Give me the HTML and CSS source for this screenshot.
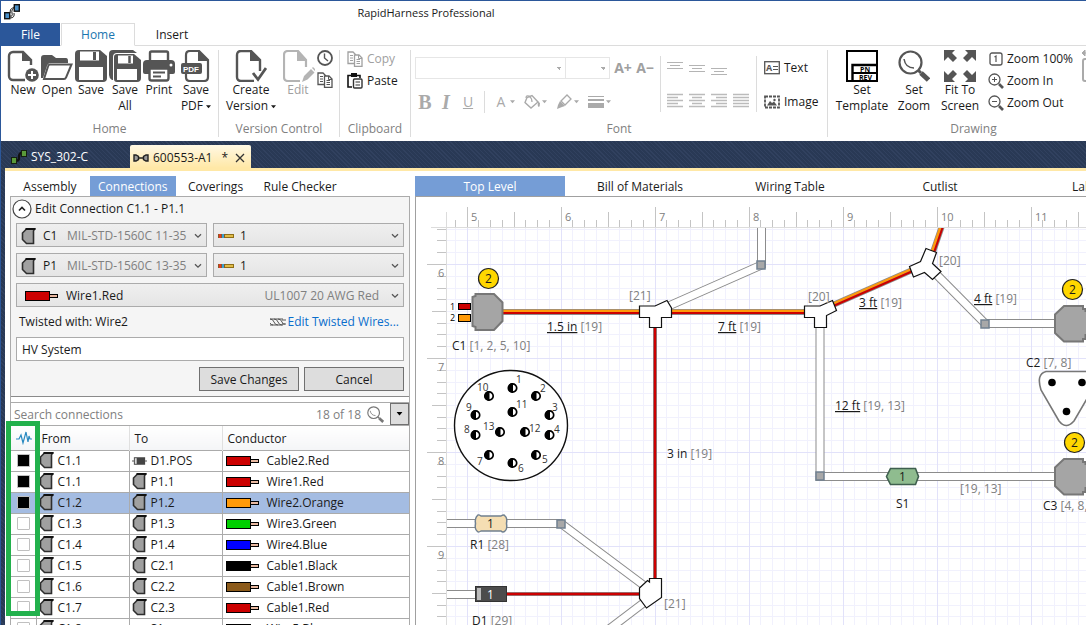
FILE: index.html
```html
<!DOCTYPE html>
<html lang="en">
<head>
<meta charset="utf-8">
<title>RapidHarness Professional</title>
<link rel="stylesheet" href="styles.css">
</head>
<body>
<svg class="defs" aria-hidden="true">
  <symbol id="i-conn" viewBox="0 0 15 17"><path d="M5.500 1H13.500L12.500 3V15.500H5.500L1.500 11.500V5Z" fill="#a0a0a0" stroke="#2e2e2e" stroke-width="1.600"/><path d="M4.500 1h10" stroke="#111" stroke-width="2"/></symbol>
  <symbol id="i-diode" viewBox="0 0 16 10"><path d="M0 5h16" stroke="#888" stroke-width="1.500"/><rect x="2" y="1" width="12" height="8" fill="#444"/><rect x="3" y="2" width="2" height="6" fill="#ddd"/></symbol>
  <symbol id="i-wire" viewBox="0 0 34 10"><rect x="24.500" y="3.500" width="8" height="3" fill="#e8b8a0" stroke="#000"/><rect x=".5" y=".5" width="24" height="9" fill="currentColor" stroke="#000"/></symbol>
  <symbol id="i-pin" viewBox="0 0 16 6"><rect y="1" width="8" height="4" fill="#8a5a2a"/><rect x="1" y="1" width="2" height="4" fill="#e03a20"/><rect x="4" y="1" width="2" height="4" fill="#3aa0d0"/><rect x="7" y="1" width="9" height="4" fill="#8f6f18"/><rect x="7" y="2" width="8" height="2" fill="#e0bc48"/></symbol>
  <symbol id="i-chev" viewBox="0 0 8 6"><path d="M1 1.200l3 3 3-3" fill="none" stroke="#555" stroke-width="1.300"/></symbol>
  <symbol id="i-down" viewBox="0 0 6 4"><path d="M0 0h6L3 3.500z" fill="currentColor"/></symbol>
  <symbol id="i-lens" viewBox="0 0 32 32"><circle cx="12.500" cy="12.500" r="11" fill="none" stroke="currentColor" stroke-width="2.200"/><path d="M6 9c1 6 5 9 10 9" fill="none" stroke="currentColor" stroke-width="1.500"/><path d="M20.500 20.500l2.500 2.500" stroke="currentColor" stroke-width="3"/><path d="M23 23l7.500 7" stroke="currentColor" stroke-width="5"/></symbol>
  <symbol id="i-docs" viewBox="0 0 16 16"><path d="M7 12.500H1V1h5l2.500 2.500V5" fill="none" stroke="currentColor" stroke-width="1.300"/><path d="M3 4.500h3M3 7h3M3 9.500h3" stroke="currentColor"/><path d="M7.500 4h4.500l3 3v8.500H7.500z" fill="#fff" stroke="currentColor" stroke-width="1.300"/><path d="M9.500 8.500H13M9.500 10.500H13M9.500 12.500H13M11.500 4v3.500H15" stroke="currentColor" fill="none"/></symbol>
</svg>

<div class="window">
  <header class="titlebar">
    <svg class="logo" width="16" height="16" viewBox="0 0 16 16"><rect x=".7" y="8.700" width="5" height="6" fill="#4a90c8" stroke="#111" stroke-width="1.400"/><rect x="10.300" y=".7" width="5" height="6.500" fill="#4a90c8" stroke="#111" stroke-width="1.400"/><path d="M6 12q3 1 2-3t3-5M6 14q5 0 4-5M6 9q-1-4 4-6" fill="none" stroke="#222" stroke-width="1"/></svg>
    <h1>RapidHarness Professional</h1>
  </header>

  <nav class="ribbon-tabs">
    <button class="rt file">File</button><button class="rt on">Home</button><button class="rt">Insert</button>
  </nav>

  <div class="ribbon">
    <section class="group g-home">
      <div class="tools">
        <button class="big"><svg width="32" height="32" viewBox="0 0 32 32"><path d="M18 30H6a4 4 0 0 1-4-4V6a4 4 0 0 1 4-4h10l8 8v5" fill="none" stroke="#555" stroke-width="2.400"/><path d="M15 1l9 10h-9z" fill="#555"/><circle cx="25" cy="25" r="6.800" fill="#555"/><path d="M25 21v8M21 25h8" stroke="#fff" stroke-width="2"/></svg>New</button>
        <button class="big"><svg width="32" height="32" viewBox="0 0 32 32"><path d="M0 28V8q0-3 3-3h8l4 3h10q2 0 2 3v2H10q-3 0-4 3L2 28z" fill="#555"/><path d="M9 14.500h21.500L25 27.500q-.5 1.500-2 1.500H3l4-12.500q.5-2 2-2z" fill="#fff" stroke="#555" stroke-width="2"/></svg>Open</button>
        <button class="big"><svg width="32" height="32" viewBox="0 0 32 32"><path d="M4 0h21l7 6v22q0 4-4 4H4q-4 0-4-4V4q0-4 4-4z" fill="#555"/><path d="M5 1.500h19v9H5zM4 17h24v13H4z" fill="#fff"/><path d="M19.500 2v8" stroke="#555" stroke-width="3"/></svg>Save</button>
        <button class="big"><svg width="32" height="32" viewBox="0 0 32 32"><path d="M3 30Q0 28 0 25V4q0-4 4-4h20l4 3H8Q4 3 4 7v23z" fill="#555"/><path d="M8 4h17l7 6v18q0 4-4 4H8q-3 0-3-3V7q0-3 3-3z" fill="#555"/><path d="M9 5.500h15v8H9zM8 19h20v11H8z" fill="#fff"/><path d="M20.500 6v7" stroke="#555" stroke-width="2.500"/></svg>Save<br>All</button>
        <button class="big"><svg width="32" height="32" viewBox="0 0 32 32"><path d="M7 11V3q0-1.500 1.500-1.500h15Q25 1.500 25 3v8" fill="none" stroke="#555" stroke-width="2.400"/><path d="M4 10h24q4 0 4 4v8q0 2-2 2H2q-2 0-2-2v-8q0-4 4-4z" fill="#555"/><circle cx="28" cy="15" r="1.500" fill="#fff"/><path d="M6.500 18.500h19V28q0 2.500-2 2.500h-15q-2 0-2-2z" fill="#fff" stroke="#555" stroke-width="2.400"/><path d="M10 22.500h12M10 26.500h8" stroke="#555" stroke-width="2"/></svg>Print</button>
        <button class="big wide"><svg width="32" height="32" viewBox="0 0 32 32"><path d="M6 13V5q0-4 4-4h9l9 9v17q0 4-4 4H10q-4 0-4-4v-3" fill="none" stroke="#555" stroke-width="2.200"/><path d="M18 0l11 11H18z" fill="#555"/><rect x="1" y="13" width="21" height="11" rx="2" fill="#555"/><text x="3" y="22" class="pdf">PDF</text></svg>Save<br>PDF <svg width="5" height="4"><use href="#i-down"/></svg></button>
      </div>
      <h2>Home</h2>
    </section>

    <section class="group g-ver">
      <div class="tools">
        <button class="big create"><svg width="32" height="32" viewBox="0 0 32 32"><path d="M19 31H6q-4 0-4-4V5q0-4 4-4h10l9 9v11" fill="none" stroke="#555" stroke-width="2.400"/><path d="M15 0l11 11H15z" fill="#555"/><path d="M18 23l5 6.500L31 18" fill="none" stroke="#555" stroke-width="2.800"/></svg>Create<br>Version <svg width="5" height="4"><use href="#i-down"/></svg></button>
        <button class="big edit" disabled><svg width="32" height="32" viewBox="0 0 32 32"><path d="M17 31H5q-4 0-4-4V5q0-4 4-4h10l8 9v7" fill="none" stroke="#b4b4b4" stroke-width="2.200"/><path d="M14 0l10 11H14z" fill="#b4b4b4"/><path d="M19 32l2-6 7-7 3.500 3.500-7 7zM29 18l1-1 3 3-1 1z" fill="#b4b4b4"/></svg>Edit</button>
        <div class="mini">
          <button aria-label="History"><svg width="16" height="16" viewBox="0 0 16 16"><circle cx="8" cy="8" r="7" fill="none" stroke="#555" stroke-width="1.800"/><path d="M7.500 3.500V8l3.500 3" fill="none" stroke="#555" stroke-width="1.400"/></svg></button>
          <button aria-label="Compare"><svg class="dk" width="16" height="16"><use href="#i-docs"/></svg></button>
        </div>
      </div>
      <h2>Version Control</h2>
    </section>

    <section class="group g-clip">
      <div class="tools stack">
        <button class="row" disabled><svg width="16" height="16"><use href="#i-docs"/></svg>Copy</button>
        <button class="row"><svg width="16" height="16" viewBox="0 0 16 16"><path d="M5 14H1V2.500h12V5" fill="none" stroke="#111" stroke-width="1.600"/><rect x="4" y="0" width="6" height="4" fill="#111"/><rect x="6.500" y="6" width="8.500" height="9" rx="1" fill="#fff" stroke="#333" stroke-width="1.400"/><path d="M8.500 9H13M8.500 12H13" stroke="#333" stroke-width="1.200"/></svg>Paste</button>
      </div>
      <h2>Clipboard</h2>
    </section>

    <section class="group g-font">
      <div class="tools font">
        <div class="fcol">
          <div class="frow">
            <span class="fsel"><select class="fam" aria-label="Font family" disabled></select><select class="siz" aria-label="Font size" disabled></select></span>
            <button class="glyph" disabled>A+</button><button class="glyph" disabled>A−</button>
          </div>
          <div class="frow marks">
            <button class="b" disabled>B</button><button class="i" disabled>I</button><button class="u" disabled>U</button>
            <span class="vr"></span>
            <button class="drop" disabled><b class="a">A</b><svg width="5" height="4"><use href="#i-down"/></svg></button>
            <button class="drop" disabled aria-label="Fill"><svg width="17" height="16" viewBox="0 0 17 16"><path d="M3 3.500L8 1.500 14 8 7 14 1 8.500z" fill="none" stroke="#aaa" stroke-width="1.400"/><path d="M2 4q0-3 3-2 3 2 3 6" fill="none" stroke="#aaa" stroke-width="1.200"/><path d="M12 6l4 3q0 3-1 4-2-1-1-4z" fill="#aaa"/></svg><svg width="5" height="4"><use href="#i-down"/></svg></button>
            <button class="drop" disabled aria-label="Outline"><svg width="17" height="16" viewBox="0 0 17 16"><path d="M5 7l6-6 4 4-6 6z" fill="none" stroke="#aaa" stroke-width="1.300"/><path d="M4 7l5 5-3 1-5 2 1-4z" fill="#aaa"/></svg><svg width="5" height="4"><use href="#i-down"/></svg></button>
            <button class="drop" disabled aria-label="Line weight"><svg width="17" height="14" viewBox="0 0 17 14"><path d="M0 1.500h16" stroke="#aaa"/><path d="M0 5h16" stroke="#aaa" stroke-width="2"/><path d="M0 10.500h16" stroke="#aaa" stroke-width="5"/></svg><svg width="5" height="4"><use href="#i-down"/></svg></button>
          </div>
        </div>
        <div class="aligns">
          <button disabled aria-label="Top"><svg width="16" height="16"><path d="M0 2.500h16M3 5.500h10M0 8.500h16" stroke="#b4b4b4"/></svg></button>
          <button disabled aria-label="Middle"><svg width="16" height="16"><path d="M0 5.500h16M3 8.500h10M0 11.500h16" stroke="#b4b4b4"/></svg></button>
          <button disabled aria-label="Bottom"><svg width="16" height="16"><path d="M0 8.500h16M3 11.500h10M0 14.500h16" stroke="#b4b4b4"/></svg></button>
          <span></span>
          <button disabled aria-label="Left"><svg width="16" height="16"><path d="M0 1.500h16M0 4.500h11M0 7.500h16M0 10.500h11M0 13.500h16" stroke="#bbb" stroke-width="1.500"/></svg></button>
          <button disabled aria-label="Center"><svg width="16" height="16"><path d="M0 1.500h16M3 4.500h10M0 7.500h16M3 10.500h10M0 13.500h16" stroke="#bbb" stroke-width="1.500"/></svg></button>
          <button disabled aria-label="Right"><svg width="16" height="16"><path d="M0 1.500h16M5 4.500h11M0 7.500h16M5 10.500h11M0 13.500h16" stroke="#bbb" stroke-width="1.500"/></svg></button>
          <button disabled aria-label="Justify"><svg width="16" height="16"><path d="M0 1.500h16M0 4.500h16M0 7.500h16M0 10.500h16M0 13.500h16" stroke="#bbb" stroke-width="1.500"/></svg></button>
        </div>
        <div class="inserts">
          <button class="row"><svg width="16" height="16" viewBox="0 0 16 16"><rect x=".7" y="1.700" width="14.600" height="12" fill="#fff" stroke="#555" stroke-width="1.300"/><text x="2" y="11" class="at">A</text><path d="M9 6.500h5M9 9.500h5" stroke="#555"/></svg>Text</button>
          <button class="row"><svg width="16" height="16" viewBox="0 0 16 16"><rect x="1" y="2.500" width="14" height="11" fill="none" stroke="#555" stroke-width="1.800" stroke-dasharray="3 1"/><path d="M3 11.500l3-4.500 2 2 2-1.500 3 4z" fill="#555"/><circle cx="10.500" cy="6" r="1.200" fill="#555"/></svg>Image</button>
        </div>
      </div>
      <h2>Font</h2>
    </section>

    <section class="group g-draw">
      <div class="tools">
        <button class="big tpl"><svg width="32" height="32" viewBox="0 0 32 32"><rect x="1" y="1" width="30" height="30" fill="#fff" stroke="#000" stroke-width="2"/><path d="M6.500 31V15H31" fill="none" stroke="#000" stroke-width="2.400"/><path d="M7 23h24" stroke="#000" stroke-width="2"/><text x="14" y="21.500" class="pn">PN</text><text x="13" y="29.500" class="pn">REV</text></svg>Set<br>Template</button>
        <button class="big zm"><svg class="dk" width="32" height="32"><use href="#i-lens"/></svg>Set<br>Zoom</button>
        <button class="big fit"><svg width="32" height="32" viewBox="0 0 32 32"><path d="M0 0h11L8 3l5 5-4 4-5-5-4 4zM32 0H21l3 3-5 5 4 4 5-5 4 4zM0 32h11l-3-3 5-5-4-4-5 5-4-4zM32 32H21l3-3-5-5 4-4 5 5 4-4z" fill="#555"/></svg>Fit To<br>Screen</button>
        <div class="stack zs">
          <button class="row"><svg width="16" height="16" viewBox="0 0 16 16"><rect x="2" y="2" width="12" height="12" rx="2" fill="none" stroke="#555" stroke-width="1.300"/><path d="M6.500 6L8 5v6" fill="none" stroke="#555" stroke-width="1.200"/></svg>Zoom 100%</button>
          <button class="row"><svg width="16" height="16" viewBox="0 0 16 16"><circle cx="6.500" cy="6.500" r="5.500" fill="none" stroke="#555" stroke-width="1.300"/><path d="M4 6.500h5M6.500 4v5" stroke="#555"/><path d="M11 11l4 4" stroke="#555" stroke-width="2.600"/></svg>Zoom In</button>
          <button class="row"><svg width="16" height="16" viewBox="0 0 16 16"><circle cx="6.500" cy="6.500" r="5.500" fill="none" stroke="#555" stroke-width="1.300"/><path d="M4 6.500h5" stroke="#555"/><path d="M11 11l4 4" stroke="#555" stroke-width="2.600"/></svg>Zoom Out</button>
        </div>
        <button class="big" disabled aria-label="Size"><svg width="32" height="32" viewBox="0 0 32 32"><path d="M0 3l3-3v6zM0 3h32" stroke="#aaa" fill="#aaa"/><rect x="1" y="9" width="30" height="22" rx="2" fill="none" stroke="#aaa" stroke-width="2"/></svg></button>
      </div>
      <h2>Drawing</h2>
    </section>
  </div>

  <div class="shell">
    <nav class="docs">
      <a class="doc" href="#sys"><svg width="16" height="16" viewBox="0 0 16 16"><path d="M5 11q3 2 3-3t4-4" fill="none" stroke="#111" stroke-width="2.400"/><rect x=".5" y="8.500" width="5" height="6" fill="#5a9a3a" stroke="#152010"/><rect x="10.500" y="1.500" width="5" height="6" fill="#5a9a3a" stroke="#152010"/></svg>SYS_302-C</a>
      <a class="doc on" href="#a1"><svg width="16" height="10" viewBox="0 0 16 10"><path d="M5 5h6" stroke="#222" stroke-width="1.500"/><path d="M1 2h2l2.500 1.500v3L3 8H1zM15 2h-2l-2.500 1.500v3L13 8h2z" fill="#999" stroke="#222" stroke-width="1.400"/></svg><span>600553-A1</span><i>*</i><svg width="10" height="10"><path d="M1 1l8 8M9 1l-8 8" stroke="#333" stroke-width="1.300"/></svg></a>
    </nav>
    <main class="work">
      <section class="left">
        <nav class="tabs">
          <button>Assembly</button><button class="on">Connections</button><button>Coverings</button><button>Rule Checker</button>
        </nav>
        <div class="panel">
          <form class="editor">
            <h3><svg width="20" height="20"><circle cx="10" cy="10" r="9" fill="#fff" stroke="#444" stroke-width="1.200"/><path d="M7 11.500l3-3 3 3" fill="none" stroke="#222" stroke-width="1.700"/></svg>Edit Connection C1.1 - P1.1</h3>
            <div class="pair">
              <label class="combo c"><select><option>C1</option></select><span><svg width="15" height="17"><use href="#i-conn"/></svg><em>MIL-STD-1560C 11-35</em><svg class="end" width="8" height="6"><use href="#i-chev"/></svg></span></label>
              <label class="combo p"><select><option>1</option></select><span><svg width="16" height="6"><use href="#i-pin"/></svg><svg class="end" width="8" height="6"><use href="#i-chev"/></svg></span></label>
            </div>
            <div class="pair">
              <label class="combo c"><select><option>P1</option></select><span><svg width="15" height="17"><use href="#i-conn"/></svg><em>MIL-STD-1560C 13-35</em><svg class="end" width="8" height="6"><use href="#i-chev"/></svg></span></label>
              <label class="combo p"><select><option>1</option></select><span><svg width="16" height="6"><use href="#i-pin"/></svg><svg class="end" width="8" height="6"><use href="#i-chev"/></svg></span></label>
            </div>
            <label class="combo w"><select><option>Wire1.Red</option></select><span><svg class="red" width="34" height="10"><use href="#i-wire"/></svg><em class="end">UL1007 20 AWG Red</em><svg width="8" height="6"><use href="#i-chev"/></svg></span></label>
            <div class="twist"><span>Twisted with: Wire2</span><a href="#twist"><svg width="16" height="8" viewBox="0 0 16 8"><path d="M0 1q3 0 4 3t4 3M0 5q1 2 3 2M4 1q3 0 4 3t4 3M8 1q3 0 4 3t3 2M0 7h13M0 1h13M12 2h4M12 6h4" fill="none" stroke="#555"/></svg>Edit Twisted Wires...</a></div>
            <input class="note" aria-label="Signal" value="HV System">
            <div class="acts"><button type="button">Save Changes</button><button type="button">Cancel</button></div>
          </form>
          <div class="search"><input aria-label="Search connections" placeholder="Search connections"><span>18 of 18</span><svg class="lens" width="17" height="17"><use href="#i-lens"/></svg><button aria-label="Search options"><svg width="7" height="4" viewBox="0 0 6 4"><use href="#i-down"/></svg></button></div>
          <table class="list">
            <colgroup><col class="k"><col class="f"><col class="t"><col></colgroup>
            <thead><tr><th><svg width="16" height="14"><path d="M0 8h3l2-4 2 8L10 1l2 10 1-6 1 3h2" fill="none" stroke="#2a8ac0" stroke-width="1.200"/></svg></th><th>From</th><th>To</th><th>Conductor</th></tr></thead>
            <tbody>
              <tr><td><input type="checkbox" checked aria-label="Highlight Cable2.Red"></td><td><div><svg width="15" height="17"><use href="#i-conn"/></svg>C1.1</div></td><td><div><svg width="15" height="10"><use href="#i-diode"/></svg>D1.POS</div></td><td><div><svg class="red" width="34" height="10"><use href="#i-wire"/></svg>Cable2.Red</div></td></tr>
              <tr><td><input type="checkbox" checked aria-label="Highlight Wire1.Red"></td><td><div><svg width="15" height="17"><use href="#i-conn"/></svg>C1.1</div></td><td><div><svg width="15" height="17"><use href="#i-conn"/></svg>P1.1</div></td><td><div><svg class="red" width="34" height="10"><use href="#i-wire"/></svg>Wire1.Red</div></td></tr>
              <tr class="sel"><td><input type="checkbox" checked aria-label="Highlight Wire2.Orange"></td><td><div><svg width="15" height="17"><use href="#i-conn"/></svg>C1.2</div></td><td><div><svg width="15" height="17"><use href="#i-conn"/></svg>P1.2</div></td><td><div><svg class="orange" width="34" height="10"><use href="#i-wire"/></svg>Wire2.Orange</div></td></tr>
              <tr><td><input type="checkbox" aria-label="Highlight Wire3.Green"></td><td><div><svg width="15" height="17"><use href="#i-conn"/></svg>C1.3</div></td><td><div><svg width="15" height="17"><use href="#i-conn"/></svg>P1.3</div></td><td><div><svg class="green" width="34" height="10"><use href="#i-wire"/></svg>Wire3.Green</div></td></tr>
              <tr><td><input type="checkbox" aria-label="Highlight Wire4.Blue"></td><td><div><svg width="15" height="17"><use href="#i-conn"/></svg>C1.4</div></td><td><div><svg width="15" height="17"><use href="#i-conn"/></svg>P1.4</div></td><td><div><svg class="blue" width="34" height="10"><use href="#i-wire"/></svg>Wire4.Blue</div></td></tr>
              <tr><td><input type="checkbox" aria-label="Highlight Cable1.Black"></td><td><div><svg width="15" height="17"><use href="#i-conn"/></svg>C1.5</div></td><td><div><svg width="15" height="17"><use href="#i-conn"/></svg>C2.1</div></td><td><div><svg class="black" width="34" height="10"><use href="#i-wire"/></svg>Cable1.Black</div></td></tr>
              <tr><td><input type="checkbox" aria-label="Highlight Cable1.Brown"></td><td><div><svg width="15" height="17"><use href="#i-conn"/></svg>C1.6</div></td><td><div><svg width="15" height="17"><use href="#i-conn"/></svg>C2.2</div></td><td><div><svg class="brown" width="34" height="10"><use href="#i-wire"/></svg>Cable1.Brown</div></td></tr>
              <tr><td><input type="checkbox" aria-label="Highlight Cable1.Red"></td><td><div><svg width="15" height="17"><use href="#i-conn"/></svg>C1.7</div></td><td><div><svg width="15" height="17"><use href="#i-conn"/></svg>C2.3</div></td><td><div><svg class="red" width="34" height="10"><use href="#i-wire"/></svg>Cable1.Red</div></td></tr>
              <tr><td><input type="checkbox" aria-label="Highlight Wire5.Blue"></td><td><div><svg width="15" height="17"><use href="#i-conn"/></svg>C1.8</div></td><td><div><svg width="15" height="8"><rect x="1" y="1" width="12" height="6" fill="#8fbc8f" stroke="#3f5f4f"/></svg>S1</div></td><td><div><svg class="black" width="34" height="10"><use href="#i-wire"/></svg>Wire5.Blue</div></td></tr>
            </tbody>
          </table>
          <div class="mark"></div>
        </div>
      </section>

      <section class="right">
        <nav class="tabs views"><button class="on">Top Level</button><button>Bill of Materials</button><button>Wiring Table</button><button>Cutlist</button><button>Labels</button></nav>
        <div class="canvas">
          <svg class="drawing" role="img" aria-label="Harness drawing">
            <defs>
              <pattern id="grid" x="467" y="264" width="94" height="94" patternUnits="userSpaceOnUse">
                <path d="M11.500 0v94M23.500 0v94M35.500 0v94M47.500 0v94M58.500 0v94M70.500 0v94M82.500 0v94M0 12.500h94M0 24.500h94M0 35.500h94M0 47.500h94M0 59.500h94M0 70.500h94M0 82.500h94" stroke="#f1f1fd"/>
                <path d="M.5 0v94M0 .5h94" stroke="#e2e2fa"/>
              </pattern>
              <pattern id="rx" x="467" y="207" width="94" height="20" patternUnits="userSpaceOnUse">
                <path d="M.5 0v20M47.500 5v15M11.500 13v7M23.500 13v7M35.500 13v7M58.500 13v7M70.500 13v7M82.500 13v7" stroke="#c4c4c4"/>
              </pattern>
              <pattern id="ry" x="427" y="264" width="20" height="94" patternUnits="userSpaceOnUse">
                <path d="M0 .5h20M5 47.500h15M10 12.500h10M10 24.500h10M10 35.500h10M10 59.500h10M10 70.500h10M10 82.500h10" stroke="#c4c4c4"/>
              </pattern>
              <clipPath id="sheet"><rect x="447" y="228" width="3000" height="3000"/></clipPath>
              <g id="pinhole"><circle r="4.200" fill="#fff" stroke="#000" stroke-width="1.700"/><path d="M.5-5a5 5 0 0 0 0 10z"/></g>
              <path id="plug" d="M0 9.500L9 1H28v3h2.500v2H39v24h-8.500v4H28v2.500H9L0 28z" fill="#a5a5a5" stroke="#777" stroke-width="2"/>
              <rect id="node" x="-4" y="-4" width="8" height="8" fill="#a8a8a8" stroke="#708090" stroke-width="1.500"/>
            </defs>
            <g transform="translate(-416 -197)">
              <rect x="447" y="228" width="3000" height="3000" fill="url(#grid)"/>
              <rect x="447" y="207" width="3000" height="20" fill="url(#rx)"/>
              <rect x="427" y="228" width="20" height="3000" fill="url(#ry)"/>
              <path d="M431 227.500h3000M446.500 212v3000" stroke="#dcdcdc"/>
              <g class="num"><text x="471" y="221">5</text><text x="565" y="221">6</text><text x="659" y="221">7</text><text x="753" y="221">8</text><text x="847" y="221">9</text><text x="941" y="221">10</text><text x="1035" y="221">11</text>
              <text x="438" y="277">6</text><text x="438" y="371">7</text><text x="438" y="465">8</text><text x="438" y="559">9</text></g>

              <g clip-path="url(#sheet)">
                <g class="tube"><path d="M761.500 220V265L655 312"/><path d="M937 275L985 323.500H1056"/><path d="M820 320V476.500H1056"/><path d="M440 523.500H561L650 590"/><path d="M440 594.500H480"/><path d="M650 598L600 636"/></g>
                <g class="core"><path d="M761.500 220V265L655 312"/><path d="M937 275L985 323.500H1056"/><path d="M820 320V476.500H1056"/><path d="M440 523.500H561L650 590"/><path d="M440 594.500H480"/><path d="M650 598L600 636"/></g>
                <path d="M503 312H815M826 308L926 264M932 255L944 220" stroke="#8c8c8c" stroke-width="6"/>
                <path d="M503 311H815M825.500 307L925.500 263M931 254.500L943 219.500" stroke="#ff9a0a" stroke-width="2.400"/>
                <path d="M503 313H815M826.500 309L926.500 265M933 255.500L945 220.500" stroke="#cc0000" stroke-width="2"/>
                <path d="M655 320V585M503 594H645" stroke="#8c8c8c" stroke-width="4"/>
                <path d="M655 320V585M503 594H645" stroke="#cc0000" stroke-width="2.400"/>
                <g fill="#fff" stroke="#111" stroke-width="1.200">
                  <path d="M639.500 306H655L667 300.500 671.500 308V317.500H661.500V327.500H649.500V317.500H639.500z"/>
                  <path d="M804.500 306H820L832.500 300.500 836.500 310.500 826.500 315.500V327.500H814.500V317.500H804.500z"/>
                  <path d="M926 248.500L936.500 252.500 932.500 263.500 941 271.500 932.500 279.500 924.500 272.500 913.500 277 909.500 266.500 920.500 261.500z"/>
                  <path d="M639.500 588L647.500 580.500 649.500 582V578.500H661.500V597.500L646.500 608 639.500 598.500z"/>
                </g>
                <use href="#node" x="761" y="265"/><use href="#node" x="985" y="324"/><use href="#node" x="820" y="476"/><use href="#node" x="561" y="524"/>
                <use href="#plug" x="1055" y="305"/><use href="#plug" x="1055" y="458"/>
                <path d="M475.500 294H494L502.500 302.500V321L494 330H475.500V327L472.500 326V297L475.500 296z" fill="#a5a5a5" stroke="#777" stroke-width="2"/>
                <rect x="458.500" y="303.500" width="12" height="6" fill="#cc0000" stroke="#000"/><rect x="458.500" y="314.500" width="12" height="7" fill="#ff9a0a" stroke="#000"/>
                <g fill="#ffd700" stroke="#222" stroke-width="1.200"><circle cx="488.500" cy="278.500" r="10"/><circle cx="1072.500" cy="289.500" r="10"/><circle cx="1074.500" cy="442.500" r="10"/></g>
                <ellipse cx="511" cy="425.500" rx="56.500" ry="55" fill="#fff" stroke="#111" stroke-width="1.400"/>
                <use href="#pinhole" x="512.500" y="388"/><use href="#pinhole" x="536" y="396"/><use href="#pinhole" x="549.500" y="415"/><use href="#pinhole" x="549.500" y="435"/><use href="#pinhole" x="536" y="455"/><use href="#pinhole" x="512.500" y="463"/><use href="#pinhole" x="489" y="455"/><use href="#pinhole" x="475.500" y="435"/><use href="#pinhole" x="475.500" y="415"/><use href="#pinhole" x="489" y="396"/><use href="#pinhole" x="512.500" y="412"/><use href="#pinhole" x="525" y="432"/><use href="#pinhole" x="500" y="432"/>
                <path d="M1046 371.500H1088Q1096 373 1092 390L1074 421Q1066 430 1059 421L1041 390Q1036 374 1046 371.500z" fill="#fff" stroke="#777" stroke-width="1.600"/>
                <circle cx="1052" cy="382.500" r="3.800"/><circle cx="1082" cy="382.500" r="3.800"/><circle cx="1066.500" cy="411.500" r="3.800"/>
                <path d="M886.500 476.500L890.500 468.500H915.500L918.500 476.500 915.500 484.500H890.500z" fill="#8fbc8f" stroke="#3f5f4f" stroke-width="1.600"/>
                <path d="M478 515Q479 514.500 481 516H501Q504 514 505 516 507.500 518 506.500 523.500 507.500 529 505 531 503 533 501 531H481Q478 533 477 531 474.500 529 475.500 523.500 474.500 518 478 515z" fill="#f5deb3" stroke="#708090" stroke-width="1.500"/>
                <rect x="475.500" y="586.500" width="31" height="15" fill="#4c4c4c" stroke="#333"/><rect x="477" y="588" width="4" height="12" fill="#bbb"/>

                <g class="lbl">
                  <text x="452" y="350">C1 <tspan>[1, 2, 5, 10]</tspan></text>
                  <text x="547" y="331"><tspan class="ln">1.5 in</tspan> <tspan>[19]</tspan></text>
                  <text x="718" y="331"><tspan class="ln">7 ft</tspan> <tspan>[19]</tspan></text>
                  <text x="629" y="300"><tspan>[21]</tspan></text>
                  <text x="808" y="301"><tspan>[20]</tspan></text>
                  <text x="859" y="307"><tspan class="ln">3 ft</tspan> <tspan>[19]</tspan></text>
                  <text x="939" y="265"><tspan>[20]</tspan></text>
                  <text x="974" y="303"><tspan class="ln">4 ft</tspan> <tspan>[19]</tspan></text>
                  <text x="1026" y="367">C2 <tspan>[7, 8]</tspan></text>
                  <text x="835" y="410"><tspan class="ln">12 ft</tspan> <tspan>[19, 13]</tspan></text>
                  <text x="960" y="493"><tspan>[19, 13]</tspan></text>
                  <text x="896" y="508">S1</text>
                  <text x="1043" y="510">C3 <tspan>[4, 8, 12]</tspan></text>
                  <text x="667" y="458">3 in <tspan>[19]</tspan></text>
                  <text x="470" y="549">R1 <tspan>[28]</tspan></text>
                  <text x="472" y="625">D1 <tspan>[29]</tspan></text>
                  <text x="664" y="608"><tspan>[21]</tspan></text>
                  <text x="485" y="283">2</text><text x="1069" y="294">2</text><text x="1071" y="447">2</text>
                  <text x="899" y="481">1</text><text x="487" y="528">1</text><text x="487" y="599" class="inv">1</text>
                </g>
                <g class="tiny"><text x="450" y="310">1</text><text x="450" y="321">2</text></g>
                <g class="pins"><text x="516" y="383">1</text><text x="540" y="392">2</text><text x="552" y="411">3</text><text x="554" y="433">4</text><text x="542" y="463">5</text><text x="518" y="472">6</text><text x="477" y="465">7</text><text x="464" y="433">8</text><text x="466" y="411">9</text><text x="477" y="391">10</text><text x="516" y="408">11</text><text x="529" y="432">12</text><text x="483" y="430">13</text></g>
              </g>
            </g>
          </svg>
        </div>
      </section>
    </main>
  </div>
</div>
</body>
</html>
```
FILE: styles.css
```css
* { box-sizing: border-box; }
html, body { height: 100%; }
body { margin: 0; overflow: hidden; font: 12px/16px "Open Sans", "Noto Sans", sans-serif; color: #1a1a1a; background: #fff; }
h1, h2, h3 { margin: 0; font-size: inherit; font-weight: 400; }
button, input, select { font: inherit; color: inherit; }
button { margin: 0; padding: 0; border: 0; background: none; white-space: nowrap; }
svg { flex: none; }
.defs { position: absolute; width: 0; height: 0; }
.window { height: 100%; display: flex; flex-direction: column; border: solid #2b579a; border-width: 1px 0 0 1px; }

.titlebar { display: flex; align-items: center; height: 22px; padding-left: 3px; }
.titlebar h1 { flex: 1; padding: 2px 254px 0 0; text-align: center; font-size: 11px; }
.ribbon-tabs { display: flex; height: 23px; border-bottom: 1px solid #dcdcdc; }
.rt { width: 74px; height: 23px; padding-top: 1px; border: 1px solid transparent; }
.rt.file { width: 59px; margin-right: 1px; background: #2b579a; color: #fff; }
.rt.on { border-color: #dcdcdc; border-bottom-color: #fff; color: #1a76b0; background: #fff; }

.ribbon { display: flex; height: 95px; overflow: hidden; padding: 4px 0; flex: none; }
.group { display: flex; flex-direction: column; flex: none; border-right: 1px solid #dcdcdc; }
.group h2 { color: #808080; text-align: center; margin-top: auto; }
.tools { display: flex; align-items: flex-start; flex: none; }
.g-home { width: 218px; }
.g-ver { width: 121px; }
.g-clip { width: 71px; }
.g-font { width: 417px; }
.g-draw { width: 292px; }
.g-home .tools { padding-left: 5px; }
.big { width: 34px; display: block; text-align: center; }
.big > svg:first-child { display: block; margin: 0 auto; }
.big svg:last-child:not(:first-child) { vertical-align: middle; }
.big.wide { width: 40px; }
.big.create { width: 64px; }
.big.edit { width: 30px; }
.big.tpl { width: 68px; }
.big.zm { width: 36px; }
.big.fit { width: 56px; }
button:disabled { color: #a0a0a0; }
.dk { color: #555; }
.mini { display: grid; gap: 6px; margin-left: 4px; }
.mini button { height: 16px; }
.row { display: flex; align-items: center; gap: 4px; height: 22px; }
.stack { display: flex; flex-direction: column; }
.g-clip .tools { padding-left: 7px; margin-top: -2px; }
.zs { margin: -2px 8px 0 0; }
.zs .row { gap: 3px; }
.font { padding: 6px 0 0 4px; }
.fcol { display: grid; gap: 10px; width: 245px; }
.frow { display: flex; align-items: center; height: 24px; }
.fsel { display: flex; margin-right: 2px; }
.fsel select { appearance: none; height: 22px; border: 1px solid #dcdcdc; background: #fff conic-gradient(from -45deg at 50% 100%, #888 90deg, transparent 0) no-repeat right 3px center / 6px 3px; }
.fam { width: 151px; }
.siz { width: 44px; border-left: 0 !important; }
.glyph { width: 22px; font-size: 14px; font-weight: 700; }
.marks button { color: #aaa; }
.marks .b, .marks .i, .marks .u { width: 22px; font: 700 20px/22px "Liberation Serif", serif; }
.marks .b { width: 20px; }
.marks .i { font-style: italic; }
.marks .u { font: 14px/20px "Open Sans", sans-serif; text-decoration: underline; }
.vr { width: 1px; height: 22px; margin: 0 11px 0 5px; background: #dcdcdc; }
.drop { display: flex; align-items: center; gap: 1px; margin-right: 9px; }
.drop .a { width: 10px; margin-right: 3px; font-size: 14px; font-weight: 400; }
.aligns { display: grid; grid-template-columns: repeat(4, 16px); gap: 11px 6px; padding: 1px 7px 0 6px; border: solid #dcdcdc; border-width: 0 1px; }
.aligns button { height: 22px; }
.aligns svg { display: block; }
.inserts { display: grid; gap: 10px; padding-left: 7px; }
.inserts .row { height: 24px; }

.shell { flex: 1; min-height: 0; display: flex; flex-direction: column; padding-left: 4px; background: repeating-linear-gradient(45deg, #293955 0 2px, #31415f 2px 3px); }
.docs { display: flex; align-items: flex-end; height: 27px; padding-left: 6px; flex: none; }
.doc { display: flex; align-items: center; gap: 4px; width: 119px; height: 23px; color: #fff; text-decoration: none; }
.doc.on { width: 121px; padding: 2px 6px 0 3px; color: #1a1a1a; background: linear-gradient(#fff8e4, #ffe8a6); border-radius: 2px 2px 0 0; }
.doc i { margin-left: auto; padding-right: 3px; font-style: normal; }
.work { flex: 1; min-height: 0; display: flex; gap: 5px; padding: 5px 0 0 5px; background: #fff; border-top: 3px solid #ffe8a6; }
.left { flex: 0 0 400px; display: flex; flex-direction: column; min-height: 0; }
.right { flex: 1; min-width: 0; display: flex; flex-direction: column; }
.tabs { display: flex; height: 20px; flex: none; }
.tabs button { min-width: 80px; padding: 2px 8px 0; }
.tabs .on { color: #fff; background: #759dd6; }
.views { overflow: hidden; }
.views button { flex: 0 0 150px; }
.canvas { flex: 1; min-height: 0; border: solid #a0a0a0; border-width: 1px 0 0 1px; }
.drawing { display: block; width: 100%; height: 100%; }

.panel { position: relative; flex: 1; min-height: 0; overflow: visible; border: solid #ababab; border-width: 1px 1px 0; }
.editor { display: grid; gap: 6px; padding: 1px 5px 5px; background: #f5f5f5; border-bottom: 1px solid #8a8a8a; }
.editor h3 { display: flex; align-items: center; gap: 3px; height: 19px; padding-top: 2px; margin-left: -4px; }
.pair { display: grid; grid-template-columns: 191px 1fr; gap: 6px; }
.combo { display: grid; min-width: 0; }
.combo > * { grid-area: 1 / 1; min-width: 0; }
.combo select { appearance: none; height: 24px; border: 1px solid #ababab; border-radius: 0; background: linear-gradient(#efefef, #e5e5e5); }
.combo select { padding: 2px 0 0 26px; }
.combo.w select { padding-left: 49px; }
.combo span { display: flex; align-items: center; padding: 2px 5px 0; pointer-events: none; }
.combo.w span { padding-left: 9px; }
.combo em { font-style: normal; color: #808080; }
.combo.c em { margin-left: 31px; }
.combo .end { margin-left: auto; }
.combo.w em { margin-right: 12px; }
.twist { display: flex; justify-content: space-between; align-items: center; height: 18px; padding: 0 5px 0 3px; }
.twist a { display: flex; align-items: center; gap: 2px; color: #0a6ecc; text-decoration: none; }
.note { height: 24px; padding: 1px 5px 0; border: 1px solid #ababab; background: #fff; }
.acts { display: flex; justify-content: flex-end; gap: 5px; }
.acts button { width: 100px; height: 24px; padding-top: 2px; border: 1px solid #707070; background: #ddd; }
.search { display: flex; align-items: center; gap: 6px; height: 24px; margin-top: 5px; border: solid #ababab; border-width: 1px 0; color: #808080; }
.search input { flex: 1; min-width: 0; border: 0; outline: 0; padding: 2px 3px 0; }
.search span { padding-top: 2px; }
.search input::placeholder { color: #808080; opacity: 1; }
.search button { width: 19px; height: 22px; border: 1px solid #707070; background: #ddd; color: #000; }
.search button svg { display: block; margin: auto; }
.lens { color: #777; }

.list { width: 100%; table-layout: fixed; border-collapse: collapse; }
.k { width: 25px; }
.f, .t { width: 93px; }
.list th { height: 24px; padding: 2px 5px 0; text-align: left; font-weight: 400; background: linear-gradient(#fff, #f4f5f7); border-right: 1px solid #e0e0e0; }
.list th:first-child { padding: 0 0 0 5px; }
.list th svg { display: block; }
.list td { height: 21px; padding: 0 2px; border: 1px solid #ababab; border-left: 0; }
.list tr > :last-child { border-right: 0; }
.list td:last-child { padding-left: 3px; }
.list td:first-child { padding: 0 0 0 6px; }
.list td div { display: flex; align-items: center; gap: 4px; height: 19px; }
.list td:last-child div { gap: 7px; }
.list input { display: block; appearance: none; width: 13px; height: 13px; margin: 0; border: 1px solid #c0c0c0; border-radius: 1px; background: #fff; }
.list input:checked { background: #000; }
.sel { background: #a4bce2; }
.mark { position: absolute; left: -5px; top: 224px; width: 34px; height: 195px; border: 5px solid #22b14c; }
.red { color: #cc0000; }
.orange { color: #ff9a0a; }
.green { color: #00d000; }
.blue { color: #0000ff; }
.black { color: #000; }
.brown { color: #8b5a1a; }

.tube path { fill: none; stroke: #8c8c8c; stroke-width: 9; }
.core path { fill: none; stroke: #fff; stroke-width: 7; }
.lbl { font-size: 12px; fill: #1a1a1a; }
.lbl tspan { fill: #808080; }
.lbl .ln { fill: #1a1a1a; text-decoration: underline; text-underline-offset: 3px; }
.lbl .inv { fill: #fff; }
.num { font-size: 11px; fill: #808080; }
.tiny { font-size: 9px; }
.pins { font-size: 10px; fill: #333; }
.pdf { font: 700 8px "Liberation Sans", sans-serif; fill: #fff; }
.at { font: 700 9px "Open Sans", sans-serif; fill: #555; }
.pn { font: 700 7px "Open Sans", sans-serif; }
```
